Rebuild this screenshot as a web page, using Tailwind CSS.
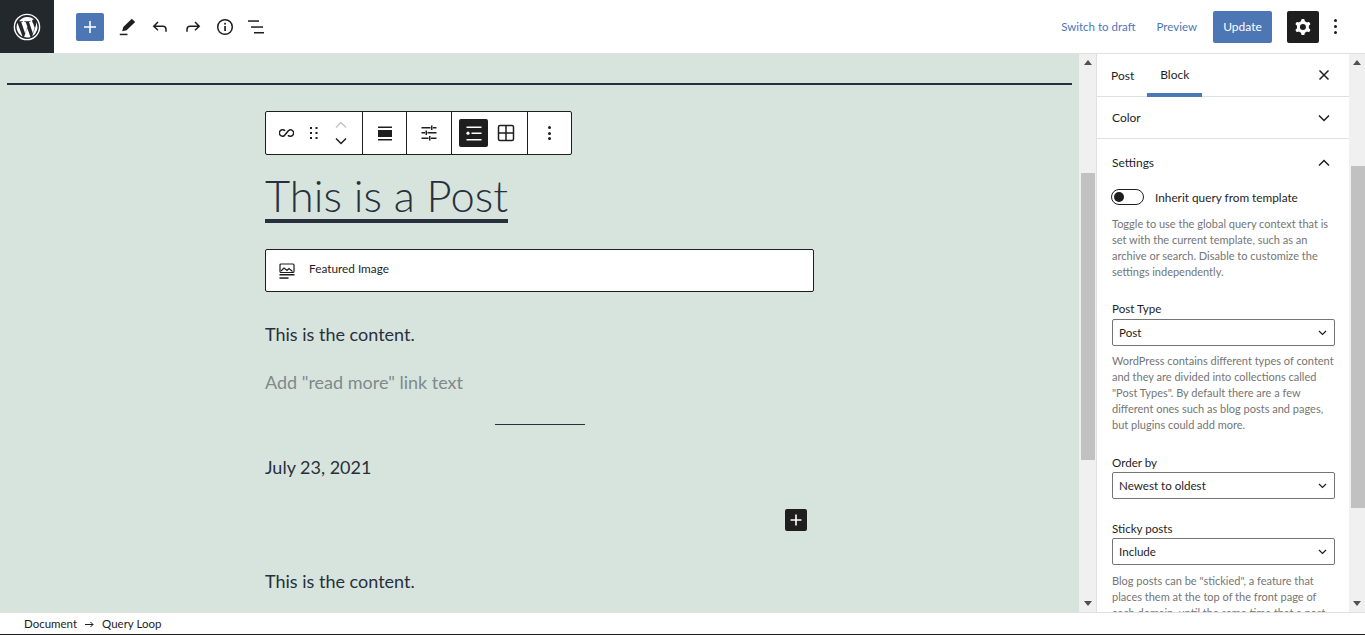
<!DOCTYPE html>
<html><head><meta charset="utf-8"><script src="https://cdn.jsdelivr.net/npm/@tailwindcss/browser@4"></script></head>
<body class="m-0 overflow-hidden bg-white">
<div class="w-[1365px] h-[635px] flex flex-col overflow-hidden font-['Lato',sans-serif] text-[#1e1e1e]">
  <header class="h-[54px] shrink-0 flex items-center border-b border-[#e0e0e0] bg-white">
    <div class="w-[54px] h-[53px] bg-[#23282d] flex items-center justify-center">
      <svg width="28" height="28" viewBox="0 0 28 28"><circle cx="14" cy="14" r="12.6" fill="none" stroke="#fff" stroke-width="1.4"/><path fill="#fff" d="M3.6 14c0 4.1 2.4 7.7 5.9 9.4L4.5 9.8A10.3 10.3 0 0 0 3.6 14zm17.4-.5c0-1.300-.5-2.200-.9-2.900-.5-.9-1-1.600-1-2.500 0-1 .8-1.900 1.800-1.900h.1A10.400 10.400 0 0 0 6 8.300h.7c1.100 0 2.800-.1 2.800-.1.600 0 .6.800 0 .9 0 0-.6.1-1.200.1l3.800 11.300 2.300-6.800-1.600-4.500c-.6 0-1.100-.1-1.100-.1-.6 0-.5-.9 0-.9 0 0 1.700.1 2.800.1s2.800-.1 2.800-.1c.6 0 .6.800 0 .9 0 0-.6.1-1.200.1l3.800 11.200 1-3.400c.5-1.300.800-2.300.800-3.100zM14.200 15l-3.100 9.100a10.400 10.400 0 0 0 6.400-.2l-.1-.1zm8.900-5.900c0 .4.100.7.100 1.100 0 1.100-.2 2.300-.8 3.800l-3.200 9.200A10.400 10.400 0 0 0 23.100 9.100z"/></svg>
    </div>
    <div class="ml-[22px] w-[28px] h-[28px] rounded-[2px] bg-[#4d76b5] flex items-center justify-center">
      <svg width="14" height="14" viewBox="0 0 14 14"><path d="M6.200 1h1.600v5.200H13v1.600H7.800V13H6.200V7.800H1V6.200h5.200z" fill="#fff"/></svg>
    </div>
    <div class="ml-[10px] w-[28px] flex justify-center"><svg width="20" height="20" viewBox="0 0 20 20"><path d="M13.800 1.800l3.400 3.300-8.600 8.100-4.400 1.100 1.100-4.300z" fill="#1e1e1e"/><rect x="1.800" y="16.700" width="7.700" height="1.500" fill="#1e1e1e"/></svg></div>
    <div class="ml-[4px] w-[28px] flex justify-center"><svg width="20" height="20" viewBox="0 0 20 20" fill="none" stroke="#1e1e1e" stroke-width="1.500"><path d="M8 5L3.800 9.200 8 13.200M3.800 9.200h9c2 0 3.200 1.400 3.200 3.200v2.400"/></svg></div>
    <div class="ml-[5px] w-[28px] flex justify-center"><svg width="20" height="20" viewBox="0 0 20 20" fill="none" stroke="#1e1e1e" stroke-width="1.500"><path d="M12 5l4.200 4.200-4.200 4M16.200 9.200h-9C5.200 9.200 4 10.600 4 12.400v2.400"/></svg></div>
    <div class="ml-[4px] w-[28px] flex justify-center"><svg width="20" height="20" viewBox="0 0 20 20" fill="none"><circle cx="10" cy="10" r="7.300" stroke="#1e1e1e" stroke-width="1.500"/><rect x="9.200" y="9" width="1.700" height="5" fill="#1e1e1e"/><rect x="9.200" y="5.800" width="1.700" height="1.800" fill="#1e1e1e"/></svg></div>
    <div class="ml-[4px] w-[28px] flex justify-center"><svg width="20" height="16" viewBox="0 0 20 16"><rect x="1" y="1.300" width="11" height="1.500" fill="#1e1e1e"/><rect x="4" y="7.300" width="12" height="1.500" fill="#1e1e1e"/><rect x="7" y="13" width="10" height="1.500" fill="#1e1e1e"/></svg></div>
    <div class="ml-auto flex items-center text-[11.500px]">
      <span class="text-[#4d76b5]">Switch to draft</span>
      <span class="ml-[21px] text-[#4d76b5]">Preview</span>
      <span class="ml-[16px] w-[59px] h-[32px] rounded-[2px] bg-[#4d76b5] text-white text-[12px] flex items-center justify-center pt-[1px]">Update</span>
      <span class="ml-[15px] w-[32px] h-[32px] rounded-[2px] bg-[#1e1e1e] flex items-center justify-center">
        <svg width="24" height="24" viewBox="0 0 24 24"><path fill="#fff" fill-rule="evenodd" d="M10.289 4.836A1 1 0 0111.275 4h1.306a1 1 0 01.987.836l.244 1.466c.787.26 1.503.679 2.108 1.218l1.393-.522a1 1 0 011.216.437l.653 1.13a1 1 0 01-.23 1.273l-1.148.944a6.025 6.025 0 010 2.435l1.149.946a1 1 0 01.23 1.272l-.653 1.13a1 1 0 01-1.216.437l-1.394-.522c-.605.54-1.32.958-2.108 1.218l-.244 1.466a1 1 0 01-.987.836h-1.306a1 1 0 01-.986-.836l-.244-1.466a5.995 5.995 0 01-2.108-1.218l-1.394.522a1 1 0 01-1.217-.436l-.653-1.131a1 1 0 01.23-1.272l1.149-.946a6.026 6.026 0 010-2.435l-1.148-.944a1 1 0 01-.23-1.272l.653-1.131a1 1 0 011.217-.437l1.393.522a5.994 5.994 0 012.108-1.218l.244-1.466zM14.929 12a3 3 0 11-6 0 3 3 0 016 0z"/></svg>
      </span>
      <span class="ml-[15px] mr-[28px] w-[3px] flex flex-col gap-[3px] items-center">
        <i class="block w-[3px] h-[3px] rounded-full bg-[#1e1e1e]"></i><i class="block w-[3px] h-[3px] rounded-full bg-[#1e1e1e]"></i><i class="block w-[3px] h-[3px] rounded-full bg-[#1e1e1e]"></i>
      </span>
    </div>
  </header>

  <div class="flex-1 min-h-0 flex">
    <main class="w-[1079px] shrink-0 bg-[#d7e4dd] overflow-hidden text-[#28303d]">
      <div class="h-[2px] mt-[29px] mx-[7px] w-[1065px] bg-[#28303d]"></div>
      <div class="ml-[265px] w-[549px]">
        <div class="mt-[26px] w-[307px] h-[44px] bg-white border border-[#1e1e1e] rounded-[2px] flex items-stretch">
          <div class="w-[97px] border-r border-[#1e1e1e] flex items-center">
            <svg class="ml-[13px]" width="15" height="10" viewBox="0 0 18 12" fill="none" stroke="#1e1e1e" stroke-width="1.800"><path d="M7.300 3.200A4 4 0 1 0 4.500 10C8 10 10 2 13.500 2a4 4 0 1 1-2.800 6.800"/></svg>
            <svg class="ml-[15px]" width="10" height="14" viewBox="0 0 10 14" fill="#1e1e1e"><rect x="1" y="1" width="2" height="2"/><rect x="6.500" y="1" width="2" height="2"/><rect x="1" y="6" width="2" height="2"/><rect x="6.500" y="6" width="2" height="2"/><rect x="1" y="11" width="2" height="2"/><rect x="6.500" y="11" width="2" height="2"/></svg>
            <div class="ml-[16px] flex flex-col gap-[8px]">
              <svg width="12" height="8" viewBox="0 0 12 8" fill="none" stroke="#c4c4c4" stroke-width="1.500"><path d="M1 6.500l5-5 5 5"/></svg>
              <svg width="12" height="8" viewBox="0 0 12 8" fill="none" stroke="#1e1e1e" stroke-width="1.500"><path d="M1 1.500l5 5 5-5"/></svg>
            </div>
          </div>
          <div class="w-[44px] border-r border-[#1e1e1e] flex items-center justify-center">
            <svg width="14" height="15" viewBox="0 0 14 15" fill="#1e1e1e"><rect x="0" y="0.500" width="14" height="1.500"/><rect x="0" y="4" width="14" height="7"/><rect x="0" y="13" width="14" height="1.500"/></svg>
          </div>
          <div class="w-[45px] border-r border-[#1e1e1e] flex items-center justify-center">
            <svg width="16" height="16" viewBox="0 0 16 16" fill="#1e1e1e"><rect x="0.500" y="2" width="9" height="1.500"/><rect x="12" y="2" width="3.500" height="1.500"/><rect x="10" y="0.500" width="1.500" height="4.500"/><rect x="0.500" y="7" width="3.500" height="1.500"/><rect x="6.500" y="7" width="9" height="1.500"/><rect x="4.500" y="5.500" width="1.500" height="4.500"/><rect x="0.500" y="12.500" width="7" height="1.500"/><rect x="10" y="12.500" width="5.500" height="1.500"/><rect x="8" y="11" width="1.500" height="4.500"/></svg>
          </div>
          <div class="w-[76px] border-r border-[#1e1e1e] flex items-center pl-[7px]">
            <div class="w-[29px] h-[28px] rounded-[2px] bg-[#1e1e1e] flex items-center justify-center">
              <svg width="16" height="15" viewBox="0 0 16 15" fill="#fff"><rect x="0.500" y="0.500" width="15" height="1.500"/><circle cx="2" cy="7.200" r="1.600"/><rect x="5.500" y="6.500" width="10" height="1.500"/><rect x="0.500" y="13" width="15" height="1.500"/></svg>
            </div>
            <svg class="ml-[9px]" width="18" height="18" viewBox="0 0 18 18" fill="none" stroke="#1e1e1e" stroke-width="1.500"><rect x="1.500" y="1.500" width="15" height="15" rx="1.500"/><path d="M9 1.500v15M1.500 9h15"/></svg>
          </div>
          <div class="flex-1 flex items-center justify-center">
            <div class="flex flex-col gap-[2.500px]"><i class="block w-[3px] h-[3px] rounded-full bg-[#1e1e1e]"></i><i class="block w-[3px] h-[3px] rounded-full bg-[#1e1e1e]"></i><i class="block w-[3px] h-[3px] rounded-full bg-[#1e1e1e]"></i></div>
          </div>
        </div>
        <h1 class="mt-[16px] w-fit h-[52px] border-b-[4px] border-[#28303d] text-[43.500px] leading-[48px] font-light">This is a Post</h1>
        <div class="mt-[26px] h-[43px] bg-white border border-[#1e1e1e] rounded-[2px] flex items-center pl-[13px] text-[11.800px] text-[#1e1e1e]">
          <svg width="16" height="16" viewBox="0 0 16 16" fill="none" stroke="#1e1e1e"><rect x="1" y="1" width="14" height="8.500" rx="1" stroke-width="1.200"/><path d="M2 8l3-3 3 2.500 2-2 3.500 3" stroke-width="1.200"/><rect x="0.500" y="11" width="15" height="1.500" fill="#1e1e1e" stroke="none"/><rect x="0.500" y="14.300" width="9" height="1.500" fill="#1e1e1e" stroke="none"/></svg>
          <span class="ml-[14px] mb-[4px]">Featured Image</span>
        </div>
        <p class="mt-[29px] text-[18px] leading-[26px]">This is the content.</p>
        <p class="mt-[22px] text-[18px] leading-[26px] text-[#7e8a8b]">Add "read more" link text</p>
        <div class="mt-[29px] mx-auto w-[90px] h-px bg-[#28303d]"></div>
        <p class="mt-[29px] text-[18px] leading-[26px]">July 23, 2021</p>
        <div class="mt-[29px] ml-[520px] w-[22px] h-[22px] rounded-[2px] bg-[#1e1e1e] flex items-center justify-center">
          <svg width="14" height="14" viewBox="0 0 14 14"><path d="M6.200 1.500h1.600v4.700h4.700v1.600H7.800v4.700H6.200V7.800H1.500V6.200h4.700z" fill="#fff"/></svg>
        </div>
        <p class="mt-[37px] text-[18px] leading-[26px]">This is the content.</p>
      </div>
    </main>

    <div class="w-[17px] shrink-0 bg-[#f0f0f0] flex flex-col items-center relative">
      <svg class="mt-[6px]" width="8" height="5" viewBox="0 0 8 5"><path d="M4 0l4 5H0z" fill="#505050"/></svg>
      <div class="mt-[108px] w-[14px] h-[287px] bg-[#c1c1c1]"></div>
      <svg class="mt-auto mb-[6px]" width="8" height="5" viewBox="0 0 8 5"><path d="M4 5l4-5H0z" fill="#505050"/></svg>
    </div>

    <aside class="w-[253px] shrink-0 border-l border-[#e0e0e0] bg-white overflow-hidden text-[12px]">
      <div class="h-[43px] flex items-stretch border-b border-[#e0e0e0] relative">
        <span class="ml-[14px] flex items-center text-[12px] pt-[2px]">Post</span>
        <span class="ml-[13px] px-[13px] w-[55px] flex items-center text-[12px] pt-[2px] border-b-[4px] h-[43px] border-[#4d76b5]">Block</span>
        <svg class="ml-auto mr-[19px] self-center" width="12" height="12" viewBox="0 0 12 12" fill="none" stroke="#1e1e1e" stroke-width="1.500"><path d="M1.500 1.500l9 9M10.500 1.500l-9 9"/></svg>
      </div>
      <div class="h-[42px] flex items-center justify-between pl-[15px] pr-[19px] border-b border-[#e0e0e0] text-[12px]">
        <span>Color</span>
        <svg width="12" height="8" viewBox="0 0 12 8" fill="none" stroke="#1e1e1e" stroke-width="1.500"><path d="M1 1.500l5 5 5-5"/></svg>
      </div>
      <div class="pl-[15px] pr-[14px]">
        <div class="h-[48px] flex items-center justify-between pr-[5px] text-[12px]">
          <span>Settings</span>
          <svg width="12" height="8" viewBox="0 0 12 8" fill="none" stroke="#1e1e1e" stroke-width="1.500"><path d="M1 6.500l5-5 5 5"/></svg>
        </div>
        <div class="-ml-[1px] flex items-center h-[20px]">
          <span class="w-[33px] h-[16px] rounded-full border border-[#1e1e1e] flex items-center pl-[2px]"><i class="block w-[10px] h-[10px] rounded-full bg-[#1e1e1e]"></i></span>
          <span class="ml-[11px] text-[11.800px] pt-[1px]">Inherit query from template</span>
        </div>
        <p class="mt-[9px] text-[11px] leading-[16px] text-[#757575]">Toggle to use the global query context that is set with the current template, such as an archive or search. Disable to customize the settings independently.</p>
        <div class="mt-[22px] h-[16px] text-[11.600px] leading-[14px]">Post Type</div>
        <div class="mt-[1px] h-[27px] border border-[#757575] rounded-[2px] flex items-center justify-between pl-[6px] pr-[7px] text-[11.600px]">
          <span class="pt-[1px]">Post</span>
          <svg width="9" height="6" viewBox="0 0 9 6" fill="none" stroke="#1e1e1e" stroke-width="1.200"><path d="M1 1l3.500 3.500L8 1"/></svg>
        </div>
        <p class="mt-[7px] text-[11px] leading-[16px] text-[#757575]">WordPress contains different types of content and they are divided into collections called "Post Types". By default there are a few different ones such as blog posts and pages, but plugins could add more.</p>
        <div class="mt-[23px] h-[16px] text-[11.600px] leading-[14px]">Order by</div>
        <div class="h-[27px] border border-[#757575] rounded-[2px] flex items-center justify-between pl-[6px] pr-[7px] text-[11.600px]">
          <span class="pt-[1px]">Newest to oldest</span>
          <svg width="9" height="6" viewBox="0 0 9 6" fill="none" stroke="#1e1e1e" stroke-width="1.200"><path d="M1 1l3.500 3.500L8 1"/></svg>
        </div>
        <div class="mt-[23px] h-[16px] text-[11.600px] leading-[14px]">Sticky posts</div>
        <div class="h-[27px] border border-[#757575] rounded-[2px] flex items-center justify-between pl-[6px] pr-[7px] text-[11.600px]">
          <span class="pt-[1px]">Include</span>
          <svg width="9" height="6" viewBox="0 0 9 6" fill="none" stroke="#1e1e1e" stroke-width="1.200"><path d="M1 1l3.500 3.500L8 1"/></svg>
        </div>
        <p class="mt-[8px] text-[11px] leading-[16px] text-[#757575]">Blog posts can be "stickied", a feature that places them at the top of the front page of each domain, until the same time that a post</p>
      </div>
    </aside>

    <div class="w-[16px] shrink-0 bg-[#f0f0f0] flex flex-col items-center">
      <svg class="mt-[6px]" width="8" height="5" viewBox="0 0 8 5"><path d="M4 0l4 5H0z" fill="#505050"/></svg>
      <div class="mt-[101px] self-end w-[14px] h-[342px] bg-[#c1c1c1]"></div>
      <svg class="mt-auto mb-[6px]" width="8" height="5" viewBox="0 0 8 5"><path d="M4 5l4-5H0z" fill="#505050"/></svg>
    </div>
  </div>

  <footer class="h-[23px] shrink-0 bg-white border-t border-[#e0e0e0] border-b border-b-[#1e1e1e] flex items-center pl-[24px] text-[11.500px] text-[#1e1e1e]">
    <span class="pt-[1px]">Document</span>
    <svg class="mx-[8px] mt-[1px]" width="9" height="7" viewBox="0 0 9 7" fill="none" stroke="#1e1e1e"><path d="M0 3.500h8M5.500 1l2.500 2.500L5.500 6"/></svg>
    <span class="pt-[1px]">Query Loop</span>
  </footer>
</div>
</body></html>
